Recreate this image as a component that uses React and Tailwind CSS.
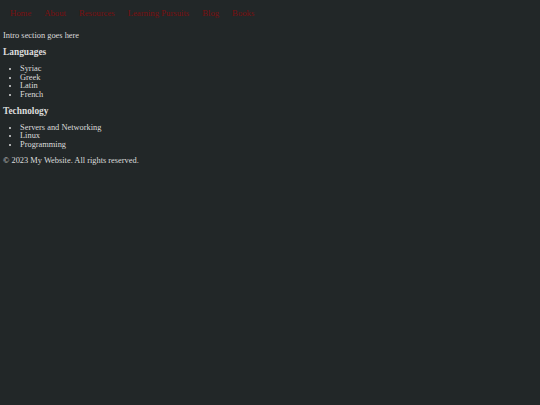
export default function App() {
  const font = { fontFamily: '"Liberation Serif", "DejaVu Serif", serif' };
  return (
    <div className="min-h-[405px] w-full bg-[#222728] text-[#dcdcdc]" style={font}>
      <nav className="flex items-center gap-[13px] px-[10px] h-[27px] text-[8.7px] text-[#7a1010]">
        <a>Home</a>
        <a>About</a>
        <a>Resources</a>
        <a>Learning Pursuits</a>
        <a>Blog</a>
        <a>Books</a>
      </nav>
      <main className="px-[3px] text-[8.4px] leading-[8.4px]">
        <p className="mt-[5px]">Intro section goes here</p>
        <h3 className="mt-[6px] text-[9.4px] font-bold leading-[12px]">Languages</h3>
        <ul className="mt-[7px] pl-[17px] list-disc">
          <li>Syriac</li>
          <li>Greek</li>
          <li>Latin</li>
          <li>French</li>
        </ul>
        <h3 className="mt-[6px] text-[9.4px] font-bold leading-[12px]">Technology</h3>
        <ul className="mt-[7px] pl-[17px] list-disc">
          <li>Servers and Networking</li>
          <li>Linux</li>
          <li>Programming</li>
        </ul>
        <footer className="mt-[8px]">© 2023 My Website. All rights reserved.</footer>
      </main>
    </div>
  );
}
